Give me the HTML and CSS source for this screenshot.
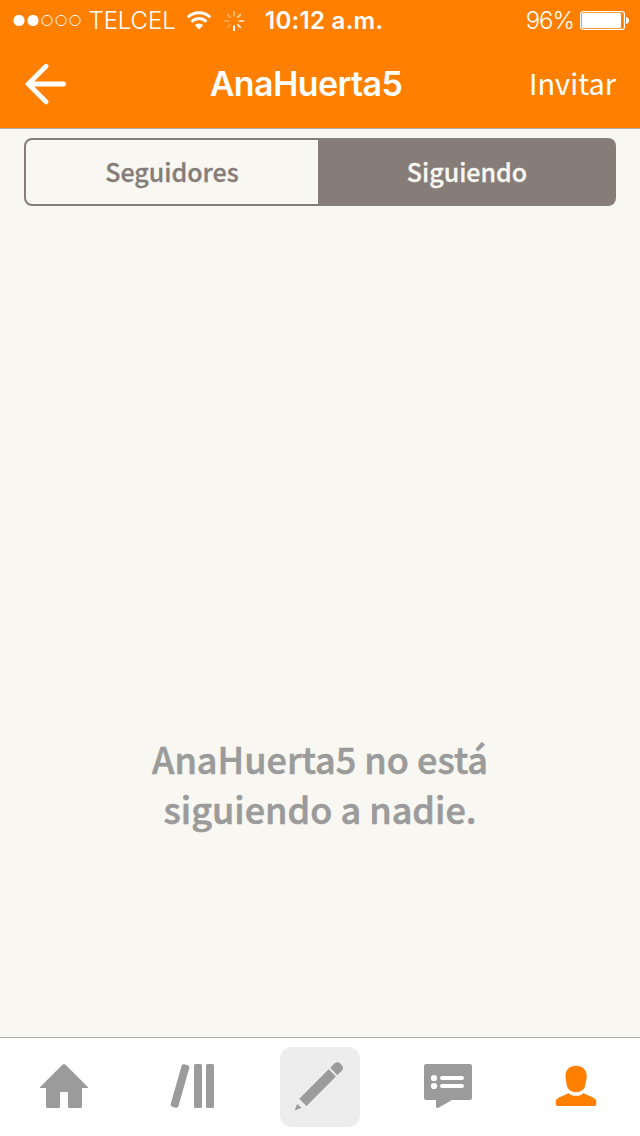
FILE: index.html
```html
<!DOCTYPE html>
<html lang="es">
  <head>
    <meta charset="UTF-8" />
    <meta name="viewport" content="width=device-width, initial-scale=1.0" />
    <title>AnaHuerta5</title>
    <link rel="stylesheet" href="styles.css">
  </head>
  <body>
    <header>
      <div class="status">
        <svg class="status__signal" width="70" height="12" viewBox="0 0 70 12">
          <circle cx="6" cy="5.5" r="5.6" fill="#fff" />
          <circle cx="20" cy="5.5" r="5.6" fill="#fff" />
          <g fill="none" stroke="#fff">
            <circle cx="34" cy="5.5" r="5.1" />
            <circle cx="48" cy="5.5" r="5.1" />
            <circle cx="62" cy="5.5" r="5.1" />
          </g>
        </svg>
        <span class="status__carrier">TELCEL</span>
        <svg class="status__wifi" width="26" height="20" viewBox="0 0 26 20">
          <g fill="none" stroke="#fff" stroke-width="3">
            <path d="M1.8 6.3a16 16 0 0 1 22.4 0" />
            <path d="M5.6 10.7a10.4 10.4 0 0 1 14.8 0" />
          </g>
          <path d="M8.8 14.2a6 6 0 0 1 8.4 0L13 18.6z" fill="#fff" />
        </svg>
        <svg class="status__spinner" width="20" height="20" viewBox="-10 -10 20 20">
          <g stroke="#fff" stroke-width="1.7">
            <path d="M0 4.5V10" stroke-width="2" />
            <path d="M-3.2 3.2L-6.8 6.8" opacity=".25" />
            <path d="M-4.5 0H-10" opacity=".3" />
            <path d="M-3.2-3.2L-6.8-6.8" opacity=".4" />
            <path d="M0-4.5V-10" opacity=".5" />
            <path d="M3.2-3.2L6.8-6.8" opacity=".65" />
            <path d="M4.5 0H10" opacity=".75" />
            <path d="M3.2 3.2L6.8 6.8" opacity=".85" />
          </g>
        </svg>
        <span class="status__time">10:12 a.m.</span>
        <span class="status__percent">96%</span>
        <svg class="status__battery" width="49" height="20" viewBox="0 0 49 20">
          <rect x=".6" y=".6" width="43.8" height="17.8" rx="2.5" fill="none" stroke="#fff" stroke-width="1.2" />
          <rect x="2" y="2" width="39" height="15" rx="1" fill="#fff" />
          <path d="M46 6q3 .8 3 3.5t-3 3.5z" fill="#fff" />
        </svg>
      </div>
      <nav class="navbar">
        <svg class="navbar__back" width="42" height="42" viewBox="0 0 42 42">
          <path d="M38.7 21H3.5M21 3.3L3.3 21L21 38.7" fill="none" stroke="#fff" stroke-width="4.8" stroke-linecap="round" />
        </svg>
        <h1 class="navbar__title">AnaHuerta5</h1>
        <span class="navbar__action">Invitar</span>
      </nav>
    </header>
    <main>
      <div class="segments">
        <div class="segment">Seguidores</div>
        <div class="segment selected">Siguiendo</div>
      </div>
      <p class="empty">AnaHuerta5 no está<br>siguiendo a nadie.</p>
    </main>
    <footer class="tabs">
      <div class="tab">
        <svg class="tab__icon" viewBox="0 0 80 80">
          <path d="M38.7 17.5Q40 16.4 41.3 17.5L64 40.2V41H58V59.5Q58 61 56.5 61H45.5Q44 61 44 59.5V46Q44 45 43 45H37Q36 45 36 46V59.5Q36 61 34.5 61H23.5Q22 61 22 59.5V41H16V40.2z" />
        </svg>
      </div>
      <div class="tab">
        <svg class="tab__icon" viewBox="0 0 80 80">
          <rect x="24" y="17" width="8" height="44" rx="2.2" transform="rotate(16 28 39)" />
          <rect x="42" y="17" width="8" height="44" rx="1.5" />
          <rect x="54" y="17" width="8" height="44" rx="1.5" />
        </svg>
      </div>
      <div class="tab">
        <svg class="tab__icon tab__icon_compose" viewBox="0 0 80 80">
          <path d="M50.3 20.7L54.5 16.5Q57.5 14 60.5 16.7L61.7 17.9Q64.2 20.8 61.7 23.8L57.3 28.2z" />
          <path d="M48.7 22.3L55.9 29.5L26.5 58.9L19.3 51.7z" />
          <path d="M17.2 57L21.5 60.8L15.6 63.3Q14.8 63.3 15.1 62.2z" />
        </svg>
      </div>
      <div class="tab">
        <svg class="tab__icon" viewBox="0 0 80 80">
          <path d="M18 17H62Q64 17 64 19V51Q64 53 62 53H44L30.5 60.7Q28 61.6 28 59.5V53H18Q16 53 16 51V19Q16 17 18 17z" />
          <g fill="#fff">
            <circle cx="26" cy="31" r="3.1" />
            <circle cx="26" cy="39" r="3.1" />
            <rect x="32" y="29" width="24" height="4" rx="2" />
            <rect x="32" y="37" width="24" height="4" rx="2" />
          </g>
        </svg>
      </div>
      <div class="tab selected">
        <svg class="tab__icon" viewBox="0 0 80 80">
          <path d="M40 18.7C46.3 18.7 50.7 22.5 50.7 29C50.7 32.5 49.8 35 49 39C48 43 44.5 45.2 40 45.2S32 43 31 39C30.2 35 29.5 32.5 29.5 29C29.5 22.5 33.7 18.7 40 18.7z" />
          <path d="M32.5 46.2C36 49.6 44 49.6 47.5 46.2L56.5 50.3Q60.3 52.2 60.3 54.5V56.5Q60.3 59 58.5 59H21.5Q19.7 59 19.7 56.5V54.5Q19.7 52.2 23.5 50.3z" />
        </svg>
      </div>
    </footer>
  </body>
</html>
```
FILE: styles.css
```css
:root {
  --orange-color: #ff8000;
  --paper-color: #f8f7f2;
  --brown-color: #867d79;
  --gray-color: #9b9b9b;
  --line-color: #acaca9;
  --white-color: #fff;
}

* {
  box-sizing: border-box;
  margin: 0;
  padding: 0;
}
body {
  height: 100vh;
  display: flex;
  flex-direction: column;
  background-color: var(--paper-color);
  font-family: "Noto Sans CJK JP", "Open Sans", sans-serif;
}
svg {
  display: block;
  flex: none;
}
header {
  height: 129px;
  background-color: var(--orange-color);
  border-bottom: 1px solid var(--line-color);
  color: var(--white-color);
}
.status {
  height: 40px;
  display: flex;
  align-items: center;
  padding: 1px 11px 0 12.5px;
  font-family: Inter, sans-serif;
  font-size: 24px;
  line-height: 40px;
  white-space: nowrap;
}
.status__carrier {
  width: 91px;
  margin-left: 6px;
  font-weight: 300;
  letter-spacing: -0.1px;
}
.status__wifi {
  margin-left: 6px;
}
.status__spinner {
  margin-left: 12.5px;
}
.status__time {
  margin-left: 21px;
  font-weight: 600;
  letter-spacing: 0.3px;
}
.status__percent {
  margin-left: auto;
  font-weight: 350;
  letter-spacing: -1px;
}
.status__battery {
  margin-left: 6px;
}
.navbar {
  height: 88px;
  display: flex;
  align-items: center;
  justify-content: space-between;
  padding: 0 24px 0 25px;
}
.navbar__title {
  padding-left: 16px;
  font-family: Inter, sans-serif;
  font-size: 34px;
  font-weight: 600;
  line-height: 88px;
  letter-spacing: -0.6px;
}
.navbar__action {
  padding-bottom: 4px;
  font-size: 29px;
  font-weight: 400;
  line-height: 84px;
}
main {
  flex: 1;
  padding: 9px 24px 0;
}
.segments {
  height: 68px;
  display: grid;
  grid-template-columns: 292px 1fr;
  border: 2px solid var(--brown-color);
  border-radius: 8px;
  color: var(--brown-color);
  font-size: 25px;
  font-weight: 500;
  line-height: 63px;
  text-align: center;
  -webkit-text-stroke: 0.3px currentColor;
}
.segment.selected {
  padding-left: 2px;
  background-color: var(--brown-color);
  color: var(--paper-color);
}
.empty {
  margin-top: 527px;
  color: var(--gray-color);
  font-size: 36px;
  font-weight: 500;
  line-height: 50px;
  text-align: center;
  -webkit-text-stroke: 0.6px currentColor;
}
.tabs {
  height: 99px;
  display: grid;
  grid-template-columns: repeat(5, 1fr);
  padding-top: 9px;
  background-color: var(--white-color);
  border-top: 1px solid var(--line-color);
}
.tab {
  display: flex;
  justify-content: center;
  color: var(--gray-color);
}
.tab.selected {
  color: var(--orange-color);
}
.tab__icon {
  width: 80px;
  height: 80px;
  fill: currentColor;
}
.tab__icon_compose {
  background-color: #ededed;
  border-radius: 12px;
}
```
